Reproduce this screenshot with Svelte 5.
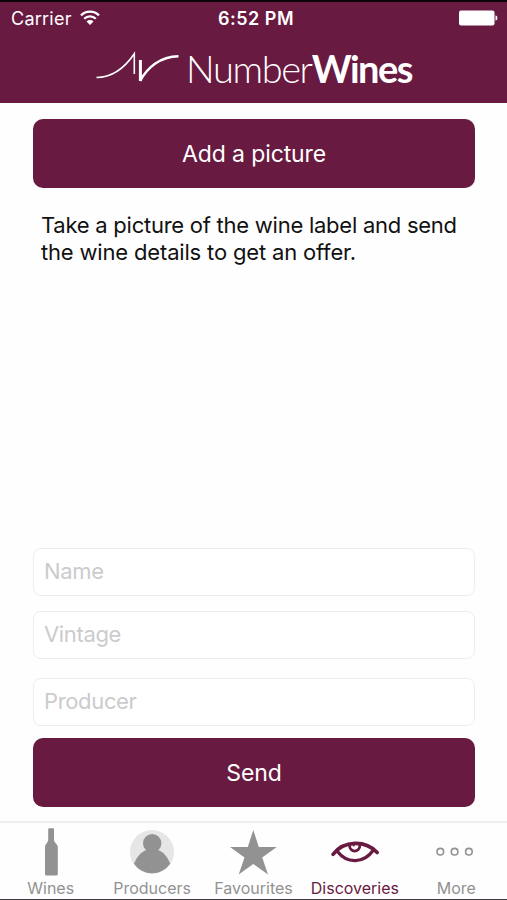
<script lang="ts">
  type Tab = { id: string; label: string };

  const tabs: Tab[] = [
    { id: 'wines', label: 'Wines' },
    { id: 'producers', label: 'Producers' },
    { id: 'favourites', label: 'Favourites' },
    { id: 'discoveries', label: 'Discoveries' },
    { id: 'more', label: 'More' },
  ];

  let active = $state('discoveries');
  let form = $state({ name: '', vintage: '', producer: '' });
</script>

<div class="screen">
  <header>
    <div class="status-bar">
      <div class="carrier">
        <span>Carrier</span>
        <svg class="wifi" viewBox="0 0 20 15" width="20" height="15">
          <path d="M1 5.4a12.7 12.7 0 0 1 18 0M4.2 8.7a8.2 8.2 0 0 1 11.6 0" fill="none" stroke="#fff" stroke-width="2.3" />
          <path d="M10 15l-3.5-3.6a4.9 4.9 0 0 1 7 0z" fill="#fff" />
        </svg>
      </div>
      <span class="time">6:52 PM</span>
      <div class="power">
        <svg viewBox="0 0 39 16" width="39" height="16">
          <rect x="0" y="0.5" width="35.5" height="15" rx="2" fill="#fff" />
          <path d="M36.5 5.2q2 .8 2 2.8t-2 2.8z" fill="#fff" />
        </svg>
      </div>
    </div>
    <div class="logo">
      <svg viewBox="0 0 92 40" width="92" height="40">
        <g fill="none" stroke="#fff">
          <path d="M2.5 29.5C19 29.5 32 18 40.3 5.8V26" stroke-width="1.6" />
          <path d="M46.4 12V33" stroke-width="3" />
          <path d="M46.2 33C53 20 66 8.5 84.5 8.3" stroke-width="2.5" />
        </g>
      </svg>
      <span class="light">Number</span>
      <span class="bold">Wines</span>
    </div>
  </header>

  <main>
    <button class="primary">Add a picture</button>
    <p>Take a picture of the wine label and send<br /><span>the wine details to get an offer.</span></p>
    <form onsubmit={(e) => e.preventDefault()}>
      <input placeholder="Name" bind:value={form.name} />
      <input placeholder="Vintage" bind:value={form.vintage} />
      <input class="producer" placeholder="Producer" bind:value={form.producer} />
      <button class="primary">Send</button>
    </form>
  </main>

  <nav>
    {#each tabs as tab (tab.id)}
      <button class="tab" class:active={active === tab.id} onclick={() => (active = tab.id)}>
        <svg viewBox="0 0 50 50" width="50" height="50">
          {#if tab.id === 'wines'}
            <path d="M22.2 3.3q0-1 1-1h3.8q1 0 1 1v10.5c0 3 3.8 4.2 3.8 7.5v26.6q0 1.6-1.6 1.6h-9.6q-1.6 0-1.6-1.6V21.3c0-3.3 3.2-4.5 3.2-7.5z" fill="currentColor" />
          {:else if tab.id === 'producers'}
            <circle cx="25" cy="26" r="22" fill="#e6e6e6" />
            <circle cx="25.2" cy="17.2" r="9.2" fill="currentColor" />
            <path d="M7 37.8C10 30.5 14 26 19.5 24h11.4C36.4 26 40.4 30.5 43.2 37.8a22 22 0 0 1-36.2 0z" fill="currentColor" />
          {:else if tab.id === 'favourites'}
            <path d="M25.3 4l5.5 17h18L34.2 31.4 40 48.6 25.3 38 10.7 48.6l5.8-17.2L2 21h17.8z" fill="currentColor" />
          {:else if tab.id === 'discoveries'}
            <g fill="none" stroke="currentColor" stroke-linecap="round">
              <path d="M3 28.3C14 14 35.5 14 47.2 26.5" stroke-width="3.6" />
              <path d="M7.5 25.5C17 38 34 37.5 43 24.5" stroke-width="3.2" />
              <path d="M19.6 18.5v1.5a5.1 5.1 0 1 0 10.2 0v-1.5" stroke-width="2.8" />
              <path d="M23.7 19v.6" stroke-width="2" />
            </g>
          {:else}
            <g fill="none" stroke="currentColor" stroke-width="1.6">
              <circle cx="9.3" cy="25.7" r="3.3" />
              <circle cx="23.6" cy="25.7" r="3.3" />
              <circle cx="37.9" cy="25.7" r="3.3" />
            </g>
          {/if}
        </svg>
        <span>{tab.label}</span>
      </button>
    {/each}
  </nav>
</div>

<style>
  :global(body) {
    margin: 0;
    background: #fff;
  }

  .screen {
    box-sizing: border-box;
    width: 507px;
    height: 900px;
    display: flex;
    flex-direction: column;
    overflow: hidden;
    border-top: 2px solid #0c0308;
    border-bottom: 1px solid #3c3a3c;
    font-family: Inter, 'Liberation Sans', sans-serif;
    color: #111;
    background: #fefefe;
  }

  header {
    box-sizing: border-box;
    height: 100.5px;
    flex: none;
    color: #fff;
    background: #681a41;
  }

  .status-bar {
    height: 32px;
    display: grid;
    grid-template-columns: 1fr auto 1fr;
    align-items: center;
    padding: 0 9px 0 11px;
    font-size: 18px;
  }

  .carrier {
    display: flex;
    align-items: center;
    gap: 8px;
    letter-spacing: 0.25px;
  }

  .wifi {
    margin-top: -2px;
  }

  .time {
    margin-left: 3px;
    font-weight: 600;
    letter-spacing: 0.5px;
  }

  .power {
    display: flex;
    justify-content: flex-end;
  }

  .logo {
    display: flex;
    height: 40px;
    margin: 14px 0 0 94px;
    font-family: Lato, sans-serif;
    font-size: 38px;
    line-height: 41px;
  }

  .light {
    font-weight: 300;
    letter-spacing: -1.4px;
  }

  .bold {
    font-weight: 700;
    letter-spacing: -1.5px;
  }

  main {
    flex: 1;
    display: flex;
    flex-direction: column;
    padding: 16.5px 32px 14px 33px;
  }

  .primary {
    width: 100%;
    height: 69px;
    flex: none;
    padding: 0;
    border: 0;
    border-radius: 10px;
    font: inherit;
    font-size: 23px;
    letter-spacing: -0.1px;
    color: #fff;
    background: #681a41;
  }

  p {
    margin: 24px 0 0 8px;
    font-size: 22px;
    line-height: 26.5px;
    letter-spacing: -0.25px;
    white-space: nowrap;
  }

  p span {
    letter-spacing: -0.17px;
  }

  form {
    display: flex;
    flex-direction: column;
    margin-top: auto;
  }

  input {
    box-sizing: border-box;
    height: 48px;
    margin: 0 0 15px;
    padding: 0 10px 2px;
    border: 1.5px solid #ededed;
    border-radius: 8px;
    font: inherit;
    font-size: 22px;
    letter-spacing: -0.35px;
    background: #fff;
  }

  .producer {
    margin: 4px 0 12px;
  }

  input::placeholder {
    color: #cbcbcd;
  }

  nav {
    box-sizing: border-box;
    height: 78px;
    flex: none;
    display: grid;
    grid-template-columns: repeat(5, 1fr);
    border-top: 2px solid #eee;
  }

  .tab {
    display: flex;
    flex-direction: column;
    align-items: center;
    padding: 3px 0 0;
    border: 0;
    font: inherit;
    font-size: 16px;
    line-height: 20px;
    color: #929292;
    background: none;
  }

  .tab span {
    margin-top: 2px;
  }

  .active {
    color: #681a41;
  }
</style>
